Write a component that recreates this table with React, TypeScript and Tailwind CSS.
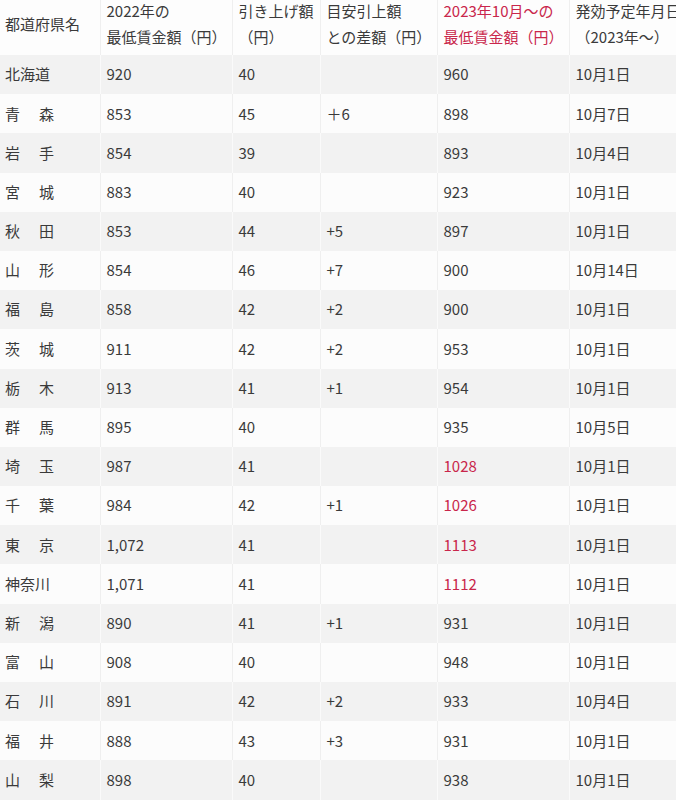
import React from "react";

type Row = {
  name: string;
  prev: string;
  raise: string;
  diff: string;
  next: string;
  date: string;
  hot?: boolean;
};

const rows: Row[] = [
  { name: "北海道", prev: "920", raise: "40", diff: "", next: "960", date: "10月1日" },
  { name: "青　森", prev: "853", raise: "45", diff: "＋6", next: "898", date: "10月7日" },
  { name: "岩　手", prev: "854", raise: "39", diff: "", next: "893", date: "10月4日" },
  { name: "宮　城", prev: "883", raise: "40", diff: "", next: "923", date: "10月1日" },
  { name: "秋　田", prev: "853", raise: "44", diff: "+5", next: "897", date: "10月1日" },
  { name: "山　形", prev: "854", raise: "46", diff: "+7", next: "900", date: "10月14日" },
  { name: "福　島", prev: "858", raise: "42", diff: "+2", next: "900", date: "10月1日" },
  { name: "茨　城", prev: "911", raise: "42", diff: "+2", next: "953", date: "10月1日" },
  { name: "栃　木", prev: "913", raise: "41", diff: "+1", next: "954", date: "10月1日" },
  { name: "群　馬", prev: "895", raise: "40", diff: "", next: "935", date: "10月5日" },
  { name: "埼　玉", prev: "987", raise: "41", diff: "", next: "1028", date: "10月1日", hot: true },
  { name: "千　葉", prev: "984", raise: "42", diff: "+1", next: "1026", date: "10月1日", hot: true },
  { name: "東　京", prev: "1,072", raise: "41", diff: "", next: "1113", date: "10月1日", hot: true },
  { name: "神奈川", prev: "1,071", raise: "41", diff: "", next: "1112", date: "10月1日", hot: true },
  { name: "新　潟", prev: "890", raise: "41", diff: "+1", next: "931", date: "10月1日" },
  { name: "富　山", prev: "908", raise: "40", diff: "", next: "948", date: "10月1日" },
  { name: "石　川", prev: "891", raise: "42", diff: "+2", next: "933", date: "10月4日" },
  { name: "福　井", prev: "888", raise: "43", diff: "+3", next: "931", date: "10月1日" },
  { name: "山　梨", prev: "898", raise: "40", diff: "", next: "938", date: "10月1日" },
];

const widths = ["w-[100px]", "w-[132px]", "w-[88px]", "w-[117px]", "w-[132px]", "w-[130px]"];

const App = () => {
  return (
    <div
      className="w-[676px] h-[800px] overflow-hidden bg-[#fdfdfd] text-[#3a3a3a] text-[15px]"
      style={{ fontFamily: '"Noto Sans CJK JP", "Noto Sans", sans-serif' }}
    >
      <table className="-mt-[7px] w-[699px] table-fixed border-collapse">
        <colgroup>
          {widths.map((w, i) => (
            <col key={i} className={w} />
          ))}
        </colgroup>
        <thead>
          <tr className="bg-[#fdfdfd] leading-[26px] text-left">
            <th className="px-[5px] py-[5px] font-normal border-r border-[#efefef]">都道府県名</th>
            <th className="px-[6px] py-[5px] font-normal border-r border-[#efefef]">
              2022年の
              <br />
              最低賃金額（円）
            </th>
            <th className="px-[6px] py-[5px] font-normal border-r border-[#efefef]">
              引き上げ額
              <br />
              （円）
            </th>
            <th className="px-[6px] py-[5px] font-normal border-r border-[#efefef]">
              目安引上額
              <br />
              との差額（円）
            </th>
            <th className="px-[6px] py-[5px] font-normal text-[#c9264b] border-r border-[#efefef]">
              2023年10月～の
              <br />
              最低賃金額（円）
            </th>
            <th className="px-[6px] py-[5px] font-normal whitespace-nowrap">
              発効予定年月日
              <br />
              （2023年～）
            </th>
          </tr>
        </thead>
        <tbody>
          {rows.map((r, i) => {
            const odd = i % 2 === 0;
            const line = odd ? "border-r border-[#fafafa]" : "border-r border-[#efefef]";
            return (
              <tr key={r.name} className={odd ? "bg-[#f2f2f2] h-[39.2px]" : "bg-[#fcfcfc] h-[39.2px]"}>
                <td className={`px-[5px] py-0 ${line}`}>
                  <span className={r.name.includes("　") ? "tracking-[2px]" : ""}>{r.name}</span>
                </td>
                <td className={`px-[6px] py-0 ${line}`}>{r.prev}</td>
                <td className={`px-[6px] py-0 ${line}`}>{r.raise}</td>
                <td className={`px-[6px] py-0 ${line}`}>{r.diff}</td>
                <td className={`px-[6px] py-0 ${line} ${r.hot ? "text-[#c9264b]" : ""}`}>{r.next}</td>
                <td className="px-[6px] py-0">{r.date}</td>
              </tr>
            );
          })}
        </tbody>
      </table>
    </div>
  );
};

export default App;
